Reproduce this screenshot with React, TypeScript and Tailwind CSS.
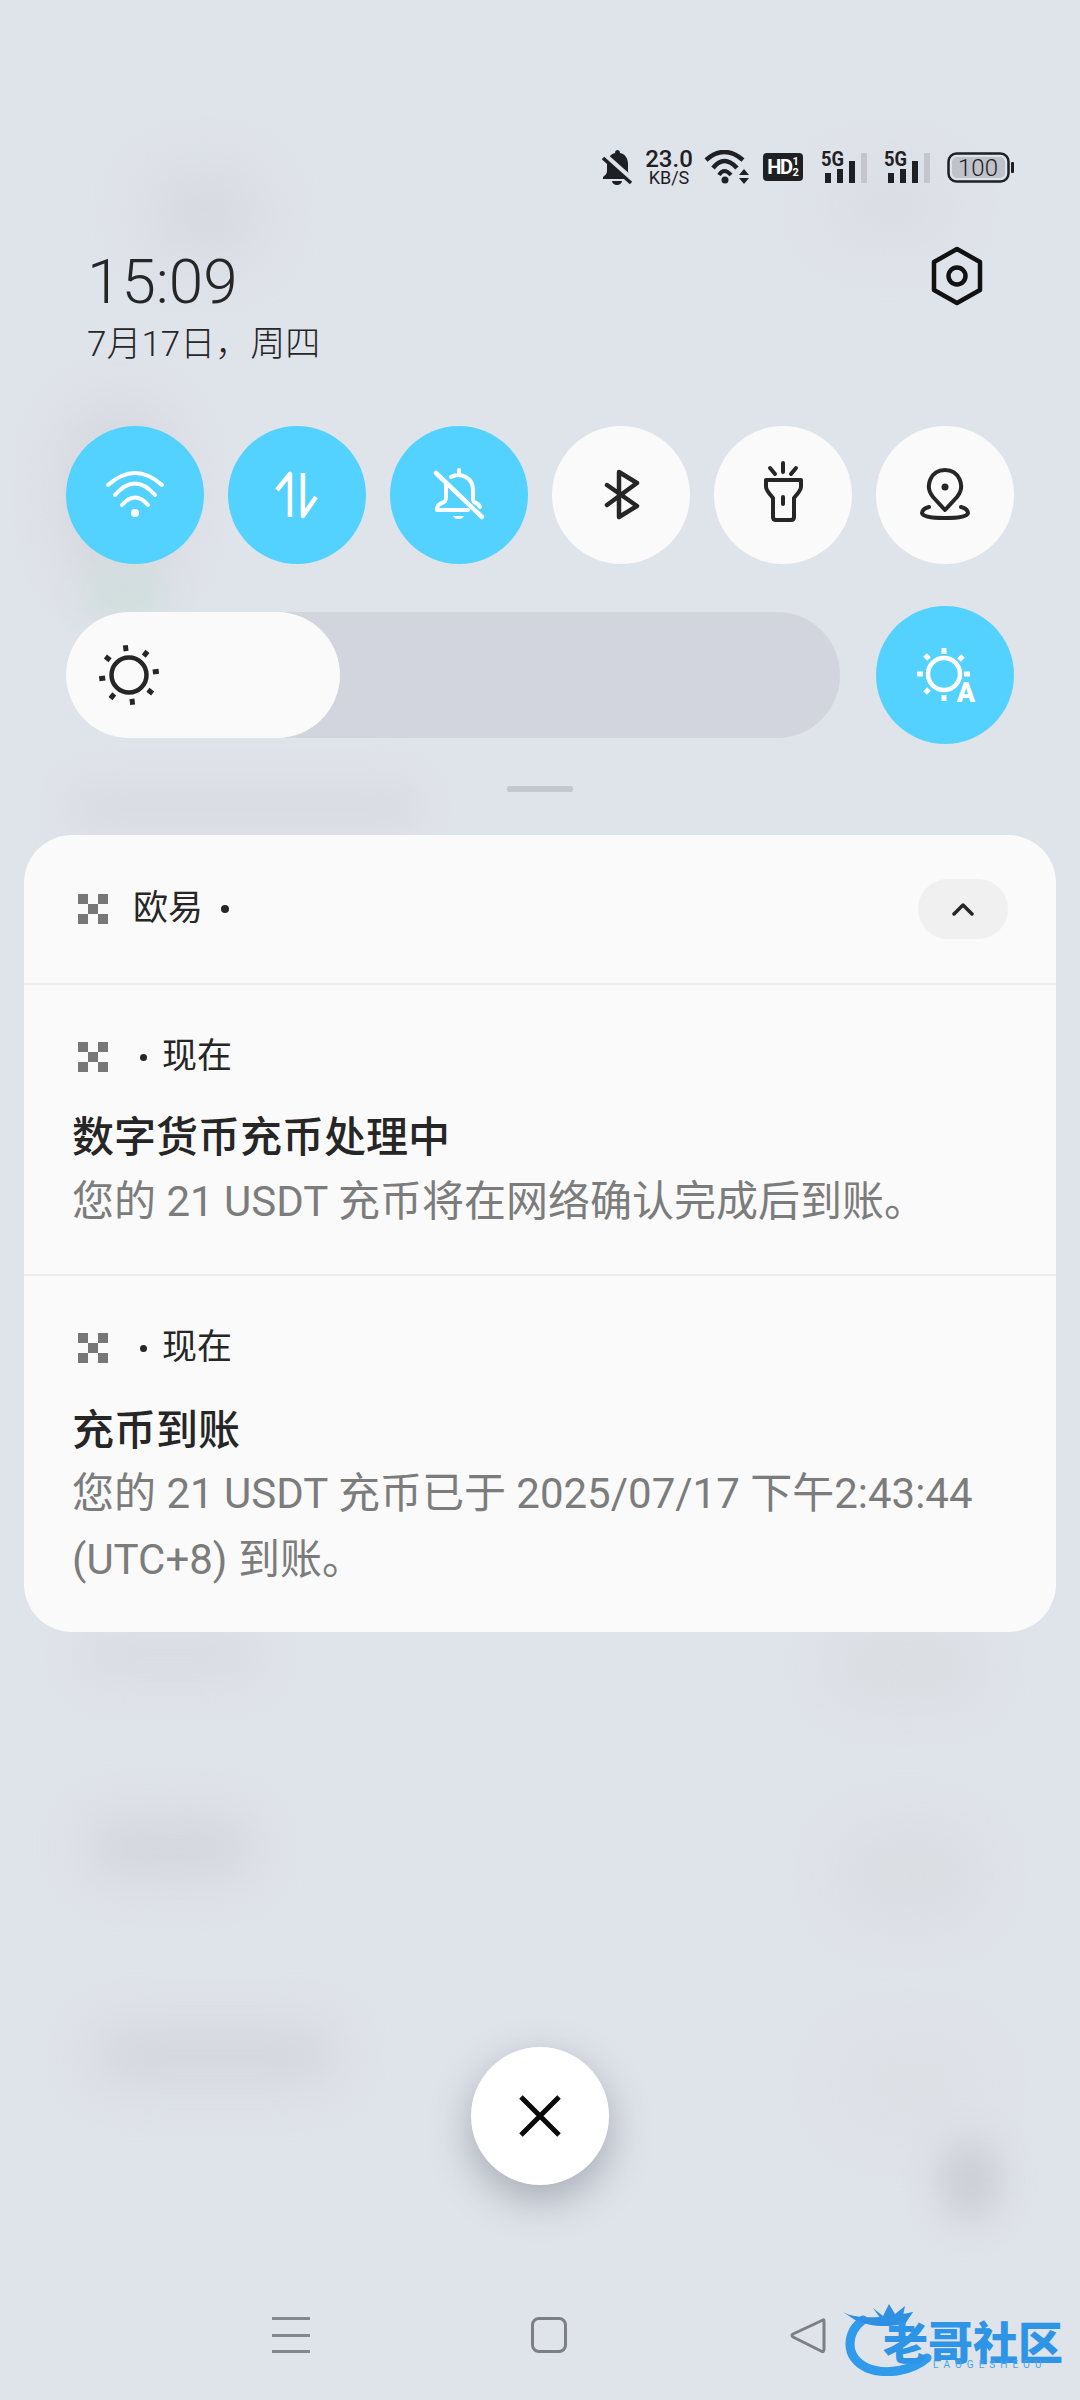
import { ReactNode } from "react";

function Blobs() {
  return (
    <div className="absolute inset-0 overflow-hidden">
      <div className="absolute left-[150px] top-[170px] w-[110px] h-[90px] rounded-full bg-[#d6d9e0] blur-[28px]" />
      <div className="absolute left-[830px] top-[170px] w-[120px] h-[70px] rounded-full bg-[#dadde4] blur-[26px]" />
      <div className="absolute left-[60px] top-[400px] w-[120px] h-[190px] rounded-full bg-[#d6d9df] blur-[24px]" />
      <div className="absolute left-[85px] top-[570px] w-[80px] h-[50px] rounded-full bg-[#cfdedc] blur-[16px]" />
      <div className="absolute left-[70px] top-[785px] w-[350px] h-[45px] rounded-full bg-[#d8dbe1] blur-[18px]" />
      <div className="absolute left-[80px] top-[1630px] w-[180px] h-[50px] rounded-full bg-[#d9dce2] blur-[20px]" />
      <div className="absolute left-[830px] top-[1630px] w-[150px] h-[70px] rounded-full bg-[#dadde1] blur-[24px]" />
      <div className="absolute left-[85px] top-[1815px] w-[170px] h-[65px] rounded-full bg-[#d4d7dd] blur-[24px]" />
      <div className="absolute left-[840px] top-[1830px] w-[140px] h-[90px] rounded-full bg-[#dadde2] blur-[26px]" />
      <div className="absolute left-[90px] top-[2025px] w-[250px] h-[60px] rounded-full bg-[#d4d7de] blur-[24px]" />
      <div className="absolute left-[840px] top-[2040px] w-[140px] h-[90px] rounded-full bg-[#dde0e5] blur-[26px]" />
      <div className="absolute left-[940px] top-[2140px] w-[60px] h-[80px] rounded-full bg-[#cbced5] blur-[18px]" />
    </div>
  );
}

function BellFilled() {
  return (
    <svg width="32" height="35" viewBox="0 0 32 35">
      <path
        d="M15 0a3 3 0 0 1 3 3c5 1 8 5 8 11v7c0 3 2 4 4 6v2H1v-2c2-2 4-3 4-6v-7c0-6 4-10 8-11a3 3 0 0 1 2-3z"
        fill="#1f2024"
      />
      <path d="M10 31h10a5 4 0 0 1-10 0z" fill="#1f2024" />
      <path d="M3 6 31 31" stroke="#dfe3ea" strokeWidth="6" />
      <path d="M1 8 29 33" stroke="#1f2024" strokeWidth="3.5" />
    </svg>
  );
}

function WifiSmall() {
  return (
    <svg width="46" height="34" viewBox="0 0 46 34" fill="none">
      <path d="M2 10Q20-6 39 10" stroke="#1f2024" strokeWidth="4.5" />
      <path d="M9 18Q20 4 33 18" stroke="#1f2024" strokeWidth="4.5" />
      <path d="M15 25Q20 17 27 25" stroke="#1f2024" strokeWidth="4" />
      <circle cx="21" cy="30" r="3.5" fill="#1f2024" />
      <path d="M35 25 40 19 45 25zM35 28H45L40 34z" fill="#1f2024" />
    </svg>
  );
}

function Signal() {
  return (
    <svg className="-mt-[6px]" width="47" height="39" viewBox="0 -6 47 39">
      <text
        x="0"
        y="15"
        fontFamily="Roboto, sans-serif"
        fontWeight="700"
        fontSize="21"
        fill="#1f2024"
        textLength="23"
        lengthAdjust="spacingAndGlyphs"
      >
        5G
      </text>
      <rect x="4" y="22" width="6" height="10" fill="#1f2024" />
      <rect x="16" y="18" width="6" height="14" fill="#1f2024" />
      <rect x="28" y="10" width="6" height="22" fill="#1f2024" />
      <rect x="40" y="2" width="6" height="30" rx="1" fill="#c4c6cb" />
    </svg>
  );
}

function Battery() {
  return (
    <svg width="68" height="31" viewBox="0 0 68 31" fill="none">
      <rect x="1.5" y="1.5" width="60" height="28" rx="8" stroke="#1f2024" strokeWidth="2.5" />
      <rect x="5" y="5" width="53" height="21" rx="5" fill="#bfc2c8" />
      <rect x="64" y="10" width="3" height="11" rx="1" fill="#1f2024" />
      <text
        x="31"
        y="24"
        textAnchor="middle"
        fontFamily="Roboto, sans-serif"
        fontWeight="300"
        fontSize="24"
        fill="#1f2024"
      >
        100
      </text>
    </svg>
  );
}

function StatusBar() {
  return (
    <div className="flex items-center justify-end h-[40px] pr-[65px] text-[#1f2024]">
      <BellFilled />
      <div className="flex flex-col items-center ml-[10px] w-[50px]">
        <span className="text-[24px] leading-[22px] font-medium">23.0</span>
        <span className="text-[18px] leading-[16px]">KB/S</span>
      </div>
      <div className="ml-[10px]">
        <WifiSmall />
      </div>
      <div className="flex items-center justify-center ml-[13px] w-[40px] h-[28px] rounded-[4px] bg-[#1f2024] text-white">
        <span className="text-[20px] leading-none font-bold tracking-[-1.5px]">HD</span>
        <span className="flex flex-col text-[11px] leading-[11px] font-bold ml-[1px]">
          <span>1</span>
          <span>2</span>
        </span>
      </div>
      <div className="ml-[18px]">
        <Signal />
      </div>
      <div className="ml-[16px]">
        <Signal />
      </div>
      <div className="ml-[16px]">
        <Battery />
      </div>
    </div>
  );
}

function Round({ on, children }: { on?: boolean; children: ReactNode }) {
  return (
    <div
      className={
        on
          ? "w-[138px] h-[138px] rounded-full bg-[#53d2ff]"
          : "w-[138px] h-[138px] rounded-full bg-[#fafafa]"
      }
    >
      {children}
    </div>
  );
}

function Glyph({
  color,
  width,
  children,
}: {
  color: string;
  width: number;
  children: ReactNode;
}) {
  return (
    <svg
      width="138"
      height="138"
      viewBox="0 0 138 138"
      fill="none"
      stroke={color}
      strokeWidth={width}
      strokeLinecap="round"
      strokeLinejoin="round"
    >
      {children}
    </svg>
  );
}

function Toggles() {
  return (
    <div className="flex gap-[24px] px-[66px] mt-[180px]">
      <Round on>
        <Glyph color="#fff" width={4}>
          <path d="M42 59Q69 35 96 59" />
          <path d="M49 69Q69 46 89 69" />
          <path d="M56 79Q69 64 82 79" />
          <circle cx="69" cy="87" r="4" fill="#fff" stroke="none" />
        </Glyph>
      </Round>
      <Round on>
        <Glyph color="#fff" width={4.5}>
          <path d="M49 64 62 48V91" strokeLinecap="butt" />
          <path d="M75 47V90L88 71" strokeLinecap="butt" />
        </Glyph>
      </Round>
      <Round on>
        <Glyph color="#fff" width={4}>
          <path d="M46 47 92 91" strokeWidth="4.5" />
          <path d="M61 51c9-5 22 0 22 13v10" />
          <path d="M56 57v14c0 5-2 5-6 7-2 1-3 2-3 6h31" />
          <path d="M84 76c2 1 5 2 6 5" />
          <path d="M69 44v3" />
          <path d="M63 90a6 5 0 0 0 11 0z" fill="#fff" stroke="none" />
        </Glyph>
      </Round>
      <Round>
        <Glyph color="#262626" width={4.5}>
          <path d="M55 59 85 80 67 91V46L85 57 55 79" />
        </Glyph>
      </Round>
      <Round>
        <Glyph color="#262626" width={4}>
          <path d="M69 37v9M56 42l5 6M82 42l-5 6" />
          <path d="M52 54H87V61Q87 64 80 72V91Q80 94 77 94H62Q59 94 59 91V72Q52 64 52 61Z" />
          <path d="M69 71v7" />
        </Glyph>
      </Round>
      <Round>
        <Glyph color="#262626" width={4}>
          <path d="M69 84 57 71C48 60 55 44 69 44S90 60 81 71Z" />
          <circle cx="69" cy="61" r="3.5" fill="#262626" stroke="none" />
          <path d="M53 81Q46 83 46 87Q47 92 69 92Q91 92 92 87Q92 83 85 81" />
        </Glyph>
      </Round>
    </div>
  );
}

function Brightness() {
  return (
    <div className="flex items-center justify-between px-[66px] mt-[42px]">
      <div className="w-[774px] h-[126px] rounded-full bg-[#d2d5dd]">
        <div className="flex items-center w-[274px] h-[126px] pl-[28px] rounded-full bg-[#fafafa]">
          <svg width="70" height="70" viewBox="0 0 70 70" fill="none" stroke="#262626">
            <circle cx="35" cy="35" r="17.5" strokeWidth="4.5" />
            <g strokeWidth="5" transform="rotate(-7 35 35)">
              <path d="M35 5v6" />
              <path d="M35 5v6" transform="rotate(45 35 35)" />
              <path d="M35 5v6" transform="rotate(90 35 35)" />
              <path d="M35 5v6" transform="rotate(135 35 35)" />
              <path d="M35 5v6" transform="rotate(180 35 35)" />
              <path d="M35 5v6" transform="rotate(225 35 35)" />
              <path d="M35 5v6" transform="rotate(270 35 35)" />
              <path d="M35 5v6" transform="rotate(315 35 35)" />
            </g>
          </svg>
        </div>
      </div>
      <Round on>
        <svg width="138" height="138" viewBox="0 0 138 138" fill="none" stroke="#fff">
          <circle cx="68" cy="68" r="16" strokeWidth="4.5" />
          <path
            d="M68 42v6M68 89v6M41 68h6M88 68h6M49 49l4 4M87 50l-4 4M49 87l4-4"
            strokeWidth="5"
          />
          <text
            x="90"
            y="96"
            textAnchor="middle"
            fontFamily="Roboto, sans-serif"
            fontWeight="900"
            fontSize="27"
            fill="#fff"
            stroke="none"
          >
            A
          </text>
        </svg>
      </Round>
    </div>
  );
}

function AppIcon() {
  return (
    <div className="grid grid-cols-3 w-[30px] h-[30px] shrink-0">
      <div className="bg-[#777]" />
      <div />
      <div className="bg-[#777]" />
      <div />
      <div className="bg-[#777]" />
      <div />
      <div className="bg-[#777]" />
      <div />
      <div className="bg-[#777]" />
    </div>
  );
}

function NoticeHead() {
  return (
    <div className="flex items-center h-[40px] pl-[54px] text-[35px] text-[#262626]">
      <AppIcon />
      <span className="ml-[32px] w-[7px] h-[7px] rounded-full bg-[#262626]" />
      <span className="ml-[15px]">现在</span>
    </div>
  );
}

function NotificationCard() {
  return (
    <div className="mx-[24px] mt-[43px] h-[797px] rounded-[48px] bg-[#fafafa]">
      <div className="flex items-center justify-between h-[150px] pl-[54px] pr-[48px] border-b-2 border-[#ececec] text-[#262626]">
        <div className="flex items-center text-[35px]">
          <AppIcon />
          <span className="ml-[25px]">欧易</span>
          <span className="ml-[18px] w-[8px] h-[8px] rounded-full bg-[#262626]" />
        </div>
        <div className="flex items-center justify-center w-[90px] h-[60px] rounded-full bg-[#f0f0f0]">
          <svg width="24" height="14" viewBox="0 0 24 14" fill="none">
            <path d="M3 12 12 3 21 12" stroke="#262626" strokeWidth="3.5" strokeLinecap="round" strokeLinejoin="round" />
          </svg>
        </div>
      </div>
      <div className="h-[291px] pt-[52px] border-b-2 border-[#ececec]">
        <NoticeHead />
        <div className="pl-[48px] mt-[41px] text-[42px] leading-[40px] font-medium text-[#262626]">
          数字货币充币处理中
        </div>
        <div className="pl-[48px] mt-[11px] text-[42px] leading-[66px] text-[#7c7c7c]">
          您的 21 USDT 充币将在网络确认完成后到账。
        </div>
      </div>
      <div className="pt-[52px]">
        <NoticeHead />
        <div className="pl-[48px] mt-[43px] text-[42px] leading-[40px] font-medium text-[#262626]">
          充币到账
        </div>
        <div className="px-[48px] mt-[10px] text-[42px] leading-[66px] text-[#7c7c7c]">
          您的 21 USDT 充币已于 2025/07/17 下午2:43:44 (UTC+8) 到账。
        </div>
      </div>
    </div>
  );
}

function NavBar() {
  return (
    <div className="flex items-start h-[70px] mt-[132px] pl-[272px]">
      <div className="flex flex-col justify-between w-[38px] h-[36px]">
        <div className="h-[3px] bg-[#85878c]" />
        <div className="h-[3px] bg-[#85878c]" />
        <div className="h-[3px] bg-[#85878c]" />
      </div>
      <div className="w-[36px] h-[36px] ml-[221px] rounded-[8px] border-[3px] border-[#7d7f85]" />
      <svg className="ml-[223px]" width="36" height="38" viewBox="0 0 36 38" fill="none">
        <path d="M33 3Q34 2 34 5V32Q34 36 31 34L3 20Q1 18 3 17Z" stroke="#7d7f85" strokeWidth="3" strokeLinejoin="round" />
      </svg>
    </div>
  );
}

function Watermark() {
  return (
    <div className="absolute left-[843px] top-[2300px] w-[225px] h-[76px]">
      <svg className="absolute left-0 top-0" width="120" height="76" viewBox="0 0 120 76" fill="none">
        <path d="M20 20C4 32 0 56 24 68 44 76 70 70 84 58" stroke="#2f9bea" strokeWidth="9" strokeLinecap="round" />
        <path d="M0 12C14 20 40 18 70 12L62 24C40 28 26 26 12 20Z" fill="#2f8fe0" />
        <path d="M30 8 40 16 46 4 52 14 62 6 60 16 70 12 62 22 40 22Z" fill="#2f8fe0" />
      </svg>
      <div className="absolute left-[40px] top-[22px] text-[45px] leading-[38px] font-black text-[#2d94e6] whitespace-nowrap font-['Noto_Sans_CJK_SC',sans-serif]">
        老哥社区
      </div>
      <div className="absolute left-[90px] top-[60px] text-[10px] leading-[10px] tracking-[5px] text-[#4aa3e8] whitespace-nowrap">
        LAOGESHEOU
      </div>
    </div>
  );
}

export default function App() {
  return (
    <div className="relative w-[1080px] h-[2400px] overflow-hidden bg-[#dfe3ea] font-['Roboto','Noto_Sans_CJK_SC',sans-serif]">
      <Blobs />
      <div className="relative pt-[147px]">
        <StatusBar />
        <div className="flex justify-between pl-[87px] pr-[96px] mt-[59px] h-[0px]">
          <div>
            <div className="text-[62px] leading-[72px] font-light text-[#262626]">15:09</div>
            <div className="mt-[5px] text-[35px] leading-[44px] font-light text-[#262626]">
              7月17日，周四
            </div>
          </div>
          <svg width="54" height="60" viewBox="0 0 54 60" fill="none" stroke="#111" strokeWidth="4.5">
            <path d="M27 3 50 16V44L27 57 4 44V16Z" strokeLinejoin="round" />
            <circle cx="27" cy="30" r="8.5" />
          </svg>
        </div>
        <Toggles />
        <Brightness />
        <div className="w-[66px] h-[6px] mx-auto mt-[42px] rounded-[2px] bg-[#c4c7cd]" />
        <NotificationCard />
        <div className="flex items-center justify-center w-[138px] h-[138px] mx-auto mt-[415px] rounded-full bg-white shadow-[0_14px_40px_rgba(60,65,80,0.35)]">
          <svg width="44" height="44" viewBox="0 0 44 44" fill="none">
            <path d="M3 3 41 41M41 3 3 41" stroke="#0a0a0a" strokeWidth="5" />
          </svg>
        </div>
        <NavBar />
      </div>
      <Watermark />
    </div>
  );
}
